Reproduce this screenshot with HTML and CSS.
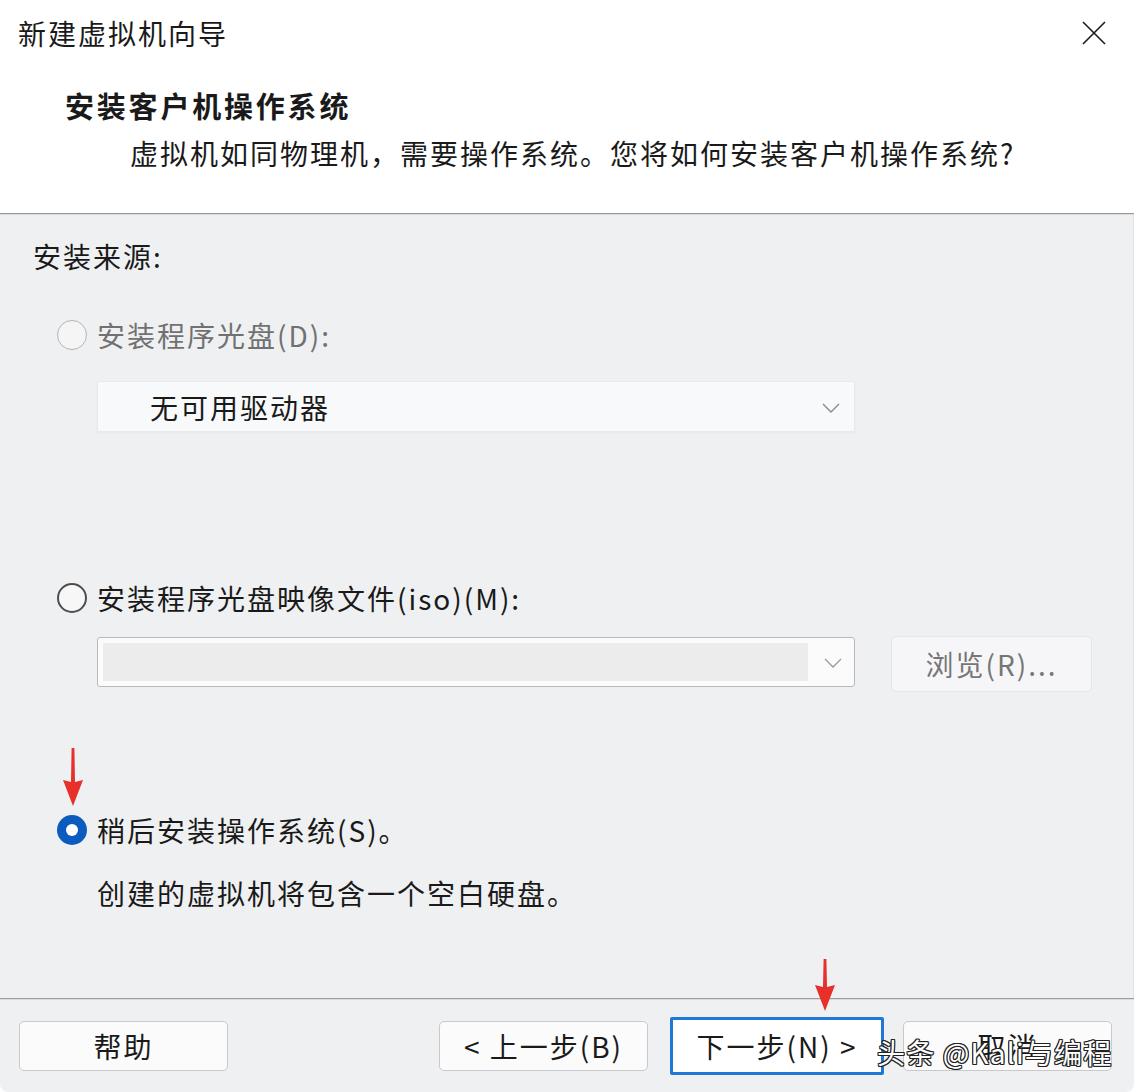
FILE: index.html
```html
<!DOCTYPE html>
<html lang="zh-CN">
<head>
<meta charset="utf-8">
<title>新建虚拟机向导</title>
<link rel="stylesheet" href="styles.css">
</head>
<body>
<div class="dialog">
  <div class="titlebar">
    <div class="title">新建虚拟机向导</div>
    <svg class="close" width="24" height="24" viewBox="0 0 24 24"><path d="M1 1 L23 23 M23 1 L1 23" stroke="#1a1a1a" stroke-width="1.6" fill="none"/></svg>
  </div>
  <div class="header">
    <div class="h-title">安装客户机操作系统</div>
    <div class="h-sub">虚拟机如同物理机，需要操作系统。您将如何安装客户机操作系统?</div>
  </div>
  <div class="sep"></div>
  <div class="content">
    <div class="label">安装来源:</div>
    <div class="radio-row r1 disabled">
      <span class="radio radio-disabled"></span>
      <span class="rtext">安装程序光盘(D):</span>
    </div>
    <div class="combo combo-flat">
      <span class="combo-text">无可用驱动器</span>
      <svg class="chev" width="18" height="10" viewBox="0 0 18 10"><path d="M1 1 L9 9 L17 1" stroke="#8a8a8a" stroke-width="1.4" fill="none"/></svg>
    </div>
    <div class="radio-row r2">
      <span class="radio radio-off"></span>
      <span class="rtext">安装程序光盘映像文件(iso)(M):</span>
    </div>
    <div class="iso-row">
      <div class="combo combo-box">
        <span class="combo-inner"></span>
        <svg class="chev" width="18" height="10" viewBox="0 0 18 10"><path d="M1 1 L9 9 L17 1" stroke="#9a9a9a" stroke-width="1.3" fill="none"/></svg>
      </div>
      <div class="browse">浏览(R)...</div>
    </div>
    <div class="radio-row r3">
      <span class="radio radio-on"></span>
      <span class="rtext">稍后安装操作系统(S)。</span>
      <svg class="arrow arrow-a" width="22" height="58" viewBox="0 0 22 58"><path d="M9.6 0 L12.4 0 L13 34 L21 32 L11 58 L1 32 L9 34 Z" fill="#e8302b"/></svg>
    </div>
    <div class="desc">创建的虚拟机将包含一个空白硬盘。</div>
  </div>
  <div class="footer">
    <div class="btn btn-help">帮助</div>
    <div class="btn btn-back">&lt; 上一步(B)</div>
    <div class="btn btn-next">下一步(N) &gt;</div>
    <div class="btn btn-cancel">取消</div>
    <svg class="arrow arrow-b" width="22" height="52" viewBox="0 0 22 52"><path d="M9.6 0 L12.4 0 L13 28 L21 26 L11 52 L1 26 L9 28 Z" fill="#e8302b"/></svg>
    <div class="watermark">头条 @Kali与编程</div>
  </div>
</div>
</body>
</html>
```

FILE: styles.css
```css
* { box-sizing: border-box; }
html, body { margin: 0; padding: 0; background: #ffffff; }
body {
  font-family: "Noto Sans CJK SC", "Noto Sans", sans-serif;
  color: #1a1a1a;
  font-size: 28px;
  letter-spacing: 2px;
}
.dialog {
  width: 1134px;
  height: 1092px;
  display: flex;
  flex-direction: column;
  background: #eff0f2;
  border-radius: 8px;
  overflow: hidden;
  position: relative;
}
.titlebar {
  height: 66px;
  background: #ffffff;
  display: flex;
  align-items: center;
  padding-left: 18px;
  padding-right: 28px;
}
.title { flex: 1; line-height: 40px; font-size: 28px; }
.close { display: block; }
.header {
  height: 147px;
  background: #ffffff;
  padding-top: 19px;
}
.h-title {
  padding-left: 65px;
  font-weight: bold;
  font-size: 29px;
  letter-spacing: 2.8px;
  line-height: 40px;
}
.h-sub {
  padding-left: 130px;
  margin-top: 8px;
  line-height: 40px;
}
.sep {
  height: 2px;
  border-top: 1px solid #9c9c9c;
  border-bottom: 1px solid #d9d9db;
}
.content {
  flex: 1;
  padding-left: 33px;
  padding-top: 21px;
  border-right: 1px solid #e2e3e5;
}
.label { line-height: 40px; }
.radio-row {
  display: flex;
  align-items: center;
  height: 40px;
  padding-left: 24px;
  position: relative;
}
.r1 { margin-top: 39px; }
.r2 { margin-top: 146px; }
.r3 { margin-top: 118px; }
.disabled .rtext { color: #717171; }
.radio {
  width: 30px;
  height: 30px;
  border-radius: 50%;
  margin-right: 10px;
  flex: none;
}
.radio-disabled { border: 1.5px solid #b4b4b4; background: #f5f5f6; }
.radio-off { border: 2px solid #4d4d4d; background: #f7f7f8; }
.radio-on {
  background: #0b5cbe;
  display: flex;
  align-items: center;
  justify-content: center;
}
.radio-on::after {
  content: "";
  width: 12px;
  height: 12px;
  border-radius: 50%;
  background: #ffffff;
}
.rtext { line-height: 40px; }
.combo {
  margin-left: 64px;
  width: 758px;
  height: 51px;
  display: flex;
  align-items: center;
  position: relative;
}
.combo-flat {
  margin-top: 26px;
  background: #f8f9fa;
  border: 1px solid #e9eaec;
  box-shadow: 0 1px 2px rgba(0,0,0,0.04);
  padding-left: 52px;
}
.combo-text { flex: 1; line-height: 40px; }
.chev { position: absolute; right: 14px; top: 21px; }
.iso-row {
  display: flex;
  align-items: flex-start;
  margin-top: 18px;
}
.combo-box {
  margin-top: 1px;
  height: 50px;
  background: #fbfbfb;
  border: 1px solid #b9b9b9;
  border-radius: 3px;
  padding: 5px 46px 5px 5px;
}
.combo-box .chev { top: 20px; right: 12px; }
.combo-inner {
  display: block;
  width: 100%;
  height: 100%;
  background: #ececed;
}
.browse {
  margin-left: 36px;
  width: 201px;
  height: 56px;
  background: #f6f6f8;
  border: 1px solid #e6e6e8;
  border-radius: 5px;
  color: #767676;
  display: flex;
  align-items: center;
  justify-content: center;
}
.arrow { position: absolute; display: block; }
.arrow-a { left: 29px; top: -62px; }
.desc {
  margin-top: 23px;
  padding-left: 64px;
  line-height: 40px;
}
.footer {
  height: 94px;
  border-top: 1px solid #9c9c9c;
  box-shadow: inset 0 1px 0 #dcdcde;
  display: flex;
  align-items: center;
  padding-left: 19px;
  padding-right: 22px;
  position: relative;
}
.btn {
  width: 209px;
  height: 50px;
  background: #fbfbfc;
  border: 1px solid #c9c9cb;
  border-radius: 5px;
  display: flex;
  align-items: center;
  justify-content: center;
  line-height: 40px;
  flex: none;
}
.btn-back { margin-left: auto; }
.btn-next {
  margin-left: 22px;
  width: 214px;
  height: 58px;
  border: 3px solid #1f78d6;
  border-radius: 2px;
  background: #ffffff;
}
.btn-cancel { margin-left: 19px; }
.arrow-b { left: 814px; top: -40px; }
.watermark {
  position: absolute;
  left: 877px;
  top: 33px;
  font-size: 28px;
  letter-spacing: 1.2px;
  line-height: 40px;
  color: #ffffff;
  text-shadow: 1px 0 0 #222, -1px 0 0 #222, 0 1px 0 #222, 0 -1px 0 #222, 1px 1px 0 #222, -1px -1px 0 #222, 1px -1px 0 #222, -1px 1px 0 #222;
}
```
